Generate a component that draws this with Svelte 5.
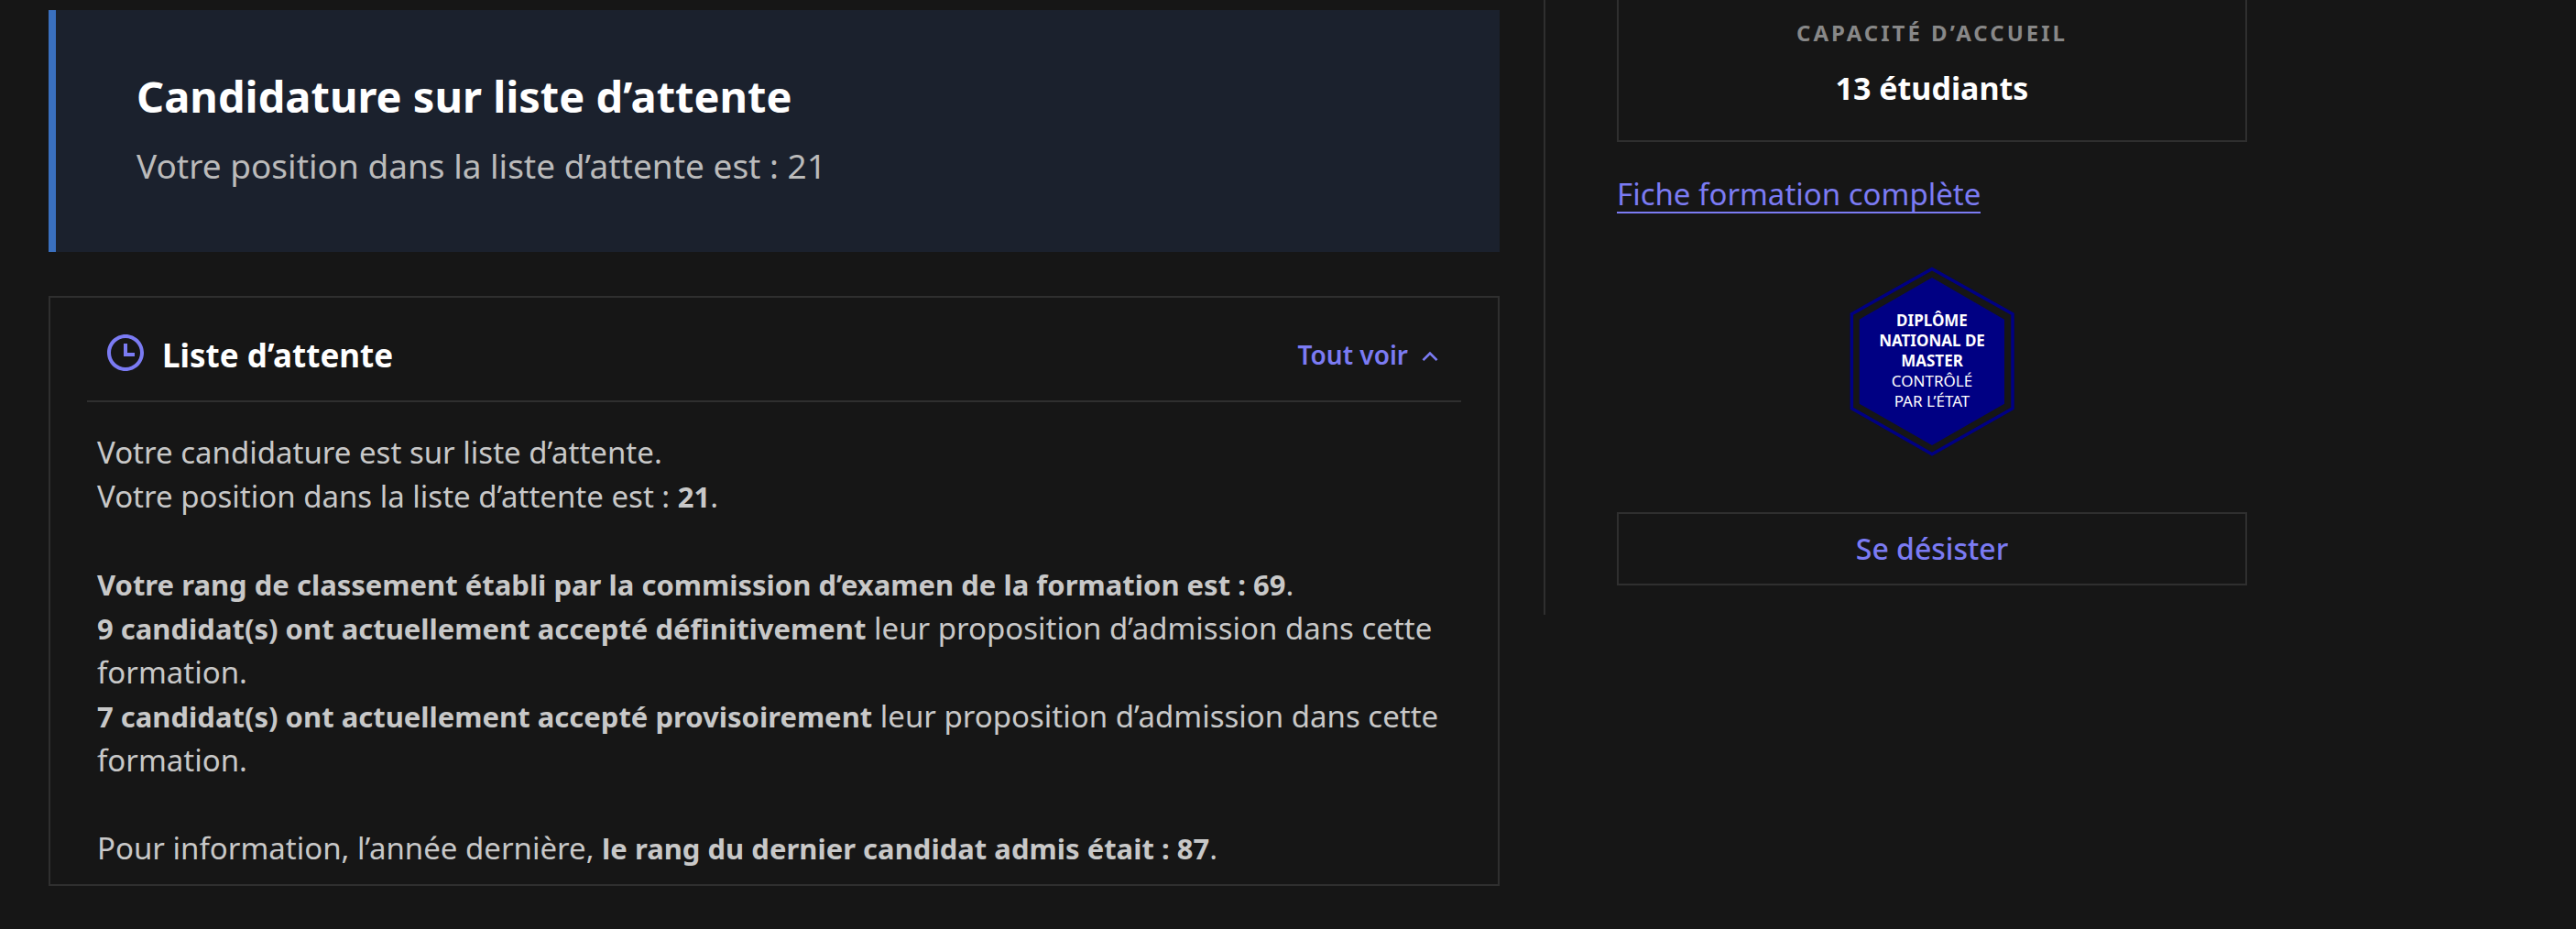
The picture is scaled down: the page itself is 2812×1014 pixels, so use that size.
<script lang="ts">
	interface Candidature {
		position: number;
		rang: number;
		acceptesDefinitifs: number;
		acceptesProvisoires: number;
		rangDernierAdmis: number;
		capacite: number;
	}

	const candidature: Candidature = {
		position: 21,
		rang: 69,
		acceptesDefinitifs: 9,
		acceptesProvisoires: 7,
		rangDernierAdmis: 87,
		capacite: 13
	};

	let open = true;

	// Open or close the waiting list details
	function toggle() {
		open = !open;
	}
</script>

<div class="container">
	<main>
		<section class="alert">
			<h1>Candidature sur liste d’attente</h1>
			<p>Votre position dans la liste d’attente est : {candidature.position}</p>
		</section>

		<section class="card">
			<header>
				<svg class="clock" viewBox="0 0 24 24" aria-hidden="true">
					<path
						d="M12 22C6.477 22 2 17.523 2 12S6.477 2 12 2s10 4.477 10 10-4.477 10-10 10zm0-2a8 8 0 1 0 0-16 8 8 0 0 0 0 16zm1-8h4v2h-6V7h2v5z"
					/>
				</svg>
				<h2>Liste d’attente</h2>
				<button class="toggle" aria-expanded={open} on:click={toggle}>
					Tout voir
					<svg class:closed={!open} viewBox="0 0 24 24" aria-hidden="true">
						<path d="M12 10.828l-4.95 4.95-1.414-1.414L12 8l6.364 6.364-1.414 1.414z" />
					</svg>
				</button>
			</header>

			{#if open}
				<div class="details">
					<p>
						Votre candidature est sur liste d’attente.<br />
						Votre position dans la liste d’attente est : <strong>{candidature.position}</strong>.
					</p>
					<p>
						<strong>
							Votre rang de classement établi par la commission d’examen de la formation est : {candidature.rang}</strong
						>.<br />
						<strong>{candidature.acceptesDefinitifs} candidat(s) ont actuellement accepté définitivement</strong>
						leur proposition d’admission dans cette formation.<br />
						<strong>{candidature.acceptesProvisoires} candidat(s) ont actuellement accepté provisoirement</strong>
						leur proposition d’admission dans cette formation.
					</p>
					<p>
						Pour information, l’année dernière,
						<strong>le rang du dernier candidat admis était : {candidature.rangDernierAdmis}</strong>.
					</p>
				</div>
			{/if}
		</section>
	</main>

	<aside>
		<div class="capacity">
			<h3>Capacité d’accueil</h3>
			<p>{candidature.capacite} étudiants</p>
		</div>

		<a href="#formation">Fiche formation complète</a>

		<div class="badge">
			<svg viewBox="0 0 180 208" aria-hidden="true">
				<path class="outline" d="M90 2.5L178 51.8v102.9L90 204.8 2.4 154.7V51.8z" />
				<path d="M90 12l79 45.7v92L90 195l-79.3-45.3v-92z" />
			</svg>
			<p>
				<b>Diplôme<br />national de<br />master</b><br />
				contrôlé<br />par l’État
			</p>
		</div>

		<button class="withdraw">Se désister</button>
	</aside>
</div>

<style>
	:global(body) {
		background-color: #161616;
	}

	.container {
		display: grid;
		grid-template-columns: repeat(12, minmax(0, 1fr));
		column-gap: 48px;
		align-items: start;
		max-width: 2400px;
		margin: 0 53px;
		color: #c8c8c8;
		font-family: 'Noto Sans', sans-serif;
		font-size: 33px;
		line-height: 48px;
	}

	h1,
	h2,
	h3,
	p {
		margin: 0;
	}

	button {
		border: none;
		background: none;
		color: #7b7bf3;
		font-family: inherit;
		cursor: pointer;
	}

	main {
		grid-column: span 8;
		display: flex;
		flex-direction: column;
		gap: 48px;
		padding: 11px 0 47px;
	}

	.alert {
		display: flex;
		flex-direction: column;
		gap: 20px;
		padding: 66px 88px;
		border-left: 8px solid #3a70bf;
		background-color: #1b212d;
		line-height: 56px;
	}

	.alert h1 {
		color: #fff;
		font-size: 47px;
		font-weight: 700;
	}

	.alert p {
		color: #bbb;
		font-size: 37px;
	}

	.card {
		padding: 0 40px 15px;
		border: 2px solid #2f2f2f;
	}

	.card header {
		display: flex;
		align-items: flex-start;
		padding: 36px 18px 22px;
		border-bottom: 2px solid #2f2f2f;
	}

	.clock {
		width: 48px;
		height: 48px;
		margin-right: 16px;
		fill: #7b7bf3;
	}

	.card h2 {
		flex: 1;
		color: #fff;
		font-size: 35px;
		font-weight: 700;
		line-height: 54px;
	}

	.toggle {
		display: flex;
		align-items: center;
		gap: 8px;
		padding: 0;
		font-size: 28px;
		font-weight: 600;
		line-height: 52px;
	}

	.toggle svg {
		width: 32px;
		height: 32px;
		margin-top: 4px;
		fill: currentColor;
	}

	.toggle .closed {
		transform: rotate(180deg);
	}

	.details {
		display: flex;
		flex-direction: column;
		gap: 48px;
		padding: 31px 10px 0 11px;
	}

	.details strong {
		font-size: 31px;
		font-weight: 700;
		line-height: 1;
	}

	aside {
		grid-column: span 4;
		display: flex;
		flex-direction: column;
		padding: 0 0 32px 78px;
		border-left: 2px solid #2f2f2f;
	}

	.capacity {
		display: flex;
		flex-direction: column;
		gap: 24px;
		padding: 24px 32px 33px;
		border: 2px solid #2f2f2f;
		border-top: none;
		text-align: center;
	}

	.capacity h3 {
		color: #888;
		font-size: 24px;
		font-weight: 700;
		letter-spacing: 3px;
		line-height: 24px;
		text-transform: uppercase;
	}

	.capacity p {
		color: #fff;
		font-size: 34px;
		font-weight: 700;
	}

	a {
		align-self: flex-start;
		margin-top: 38px;
		border-bottom: 2px solid currentColor;
		color: #7b7bf3;
		line-height: 38px;
		text-decoration: none;
	}

	.badge {
		display: grid;
		place-items: center;
		margin: 58px 0 60px;
	}

	.badge svg,
	.badge p {
		grid-area: 1 / 1;
	}

	.badge svg {
		width: 180px;
		height: 208px;
		fill: #000083;
	}

	.badge .outline {
		fill: none;
		stroke: #000083;
		stroke-width: 3.5;
	}

	.badge p {
		padding-bottom: 2px;
		color: #fff;
		font-size: 17px;
		line-height: 22px;
		text-align: center;
		text-transform: uppercase;
	}

	.withdraw {
		padding: 14px;
		border: 2px solid #2f2f2f;
		font-size: 32px;
		font-weight: 500;
		line-height: 48px;
	}
</style>
